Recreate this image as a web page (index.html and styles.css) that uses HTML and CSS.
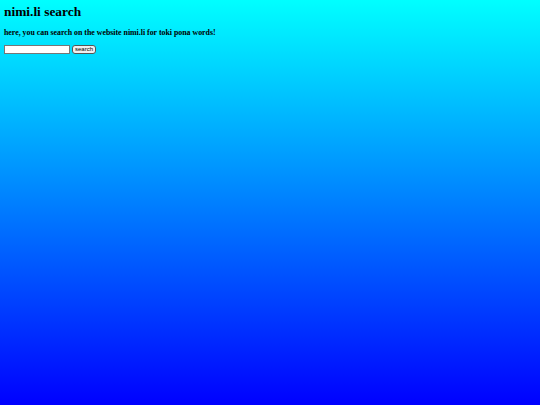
FILE: index.html
```html
<!DOCTYPE html>
<html>
<head>
<meta charset="utf-8">
<link rel="stylesheet" href="styles.css">
</head>
<body>
<h1 class="title">nimi.li search</h1>
<p class="intro">here, you can search on the website nimi.li for toki pona words!</p>
<form class="search">
<input class="field" type="text"><button class="btn" type="button">search</button>
</form>
</body>
</html>
```
FILE: styles.css
```css
html { height: 100%; }
body {
  margin: 0;
  padding: 4px;
  min-height: 100%;
  box-sizing: border-box;
  background: linear-gradient(to bottom, #00ffff, #0000ff);
  font-family: "Liberation Serif", serif;
  color: #000;
}
.title {
  font-size: 13.4px;
  font-weight: bold;
  margin: 0 0 8px 0;
  line-height: 16px;
}
.intro {
  font-size: 7.85px;
  font-weight: bold;
  margin: 0 0 7px 0;
  line-height: 10px;
}
.search { display: flex; align-items: center; gap: 2px; margin: 0; }
.field {
  width: 66px;
  height: 9px;
  padding: 0;
  border: 1px solid #767676;
  box-sizing: border-box;
  background: #fff;
}
.btn {
  font-family: "Liberation Sans", sans-serif;
  font-size: 6px;
  height: 9px;
  padding: 0 2px;
  line-height: 7px;
  border: 1px solid #555;
  border-radius: 3px;
  background: #efefef;
  color: #000;
}
```
